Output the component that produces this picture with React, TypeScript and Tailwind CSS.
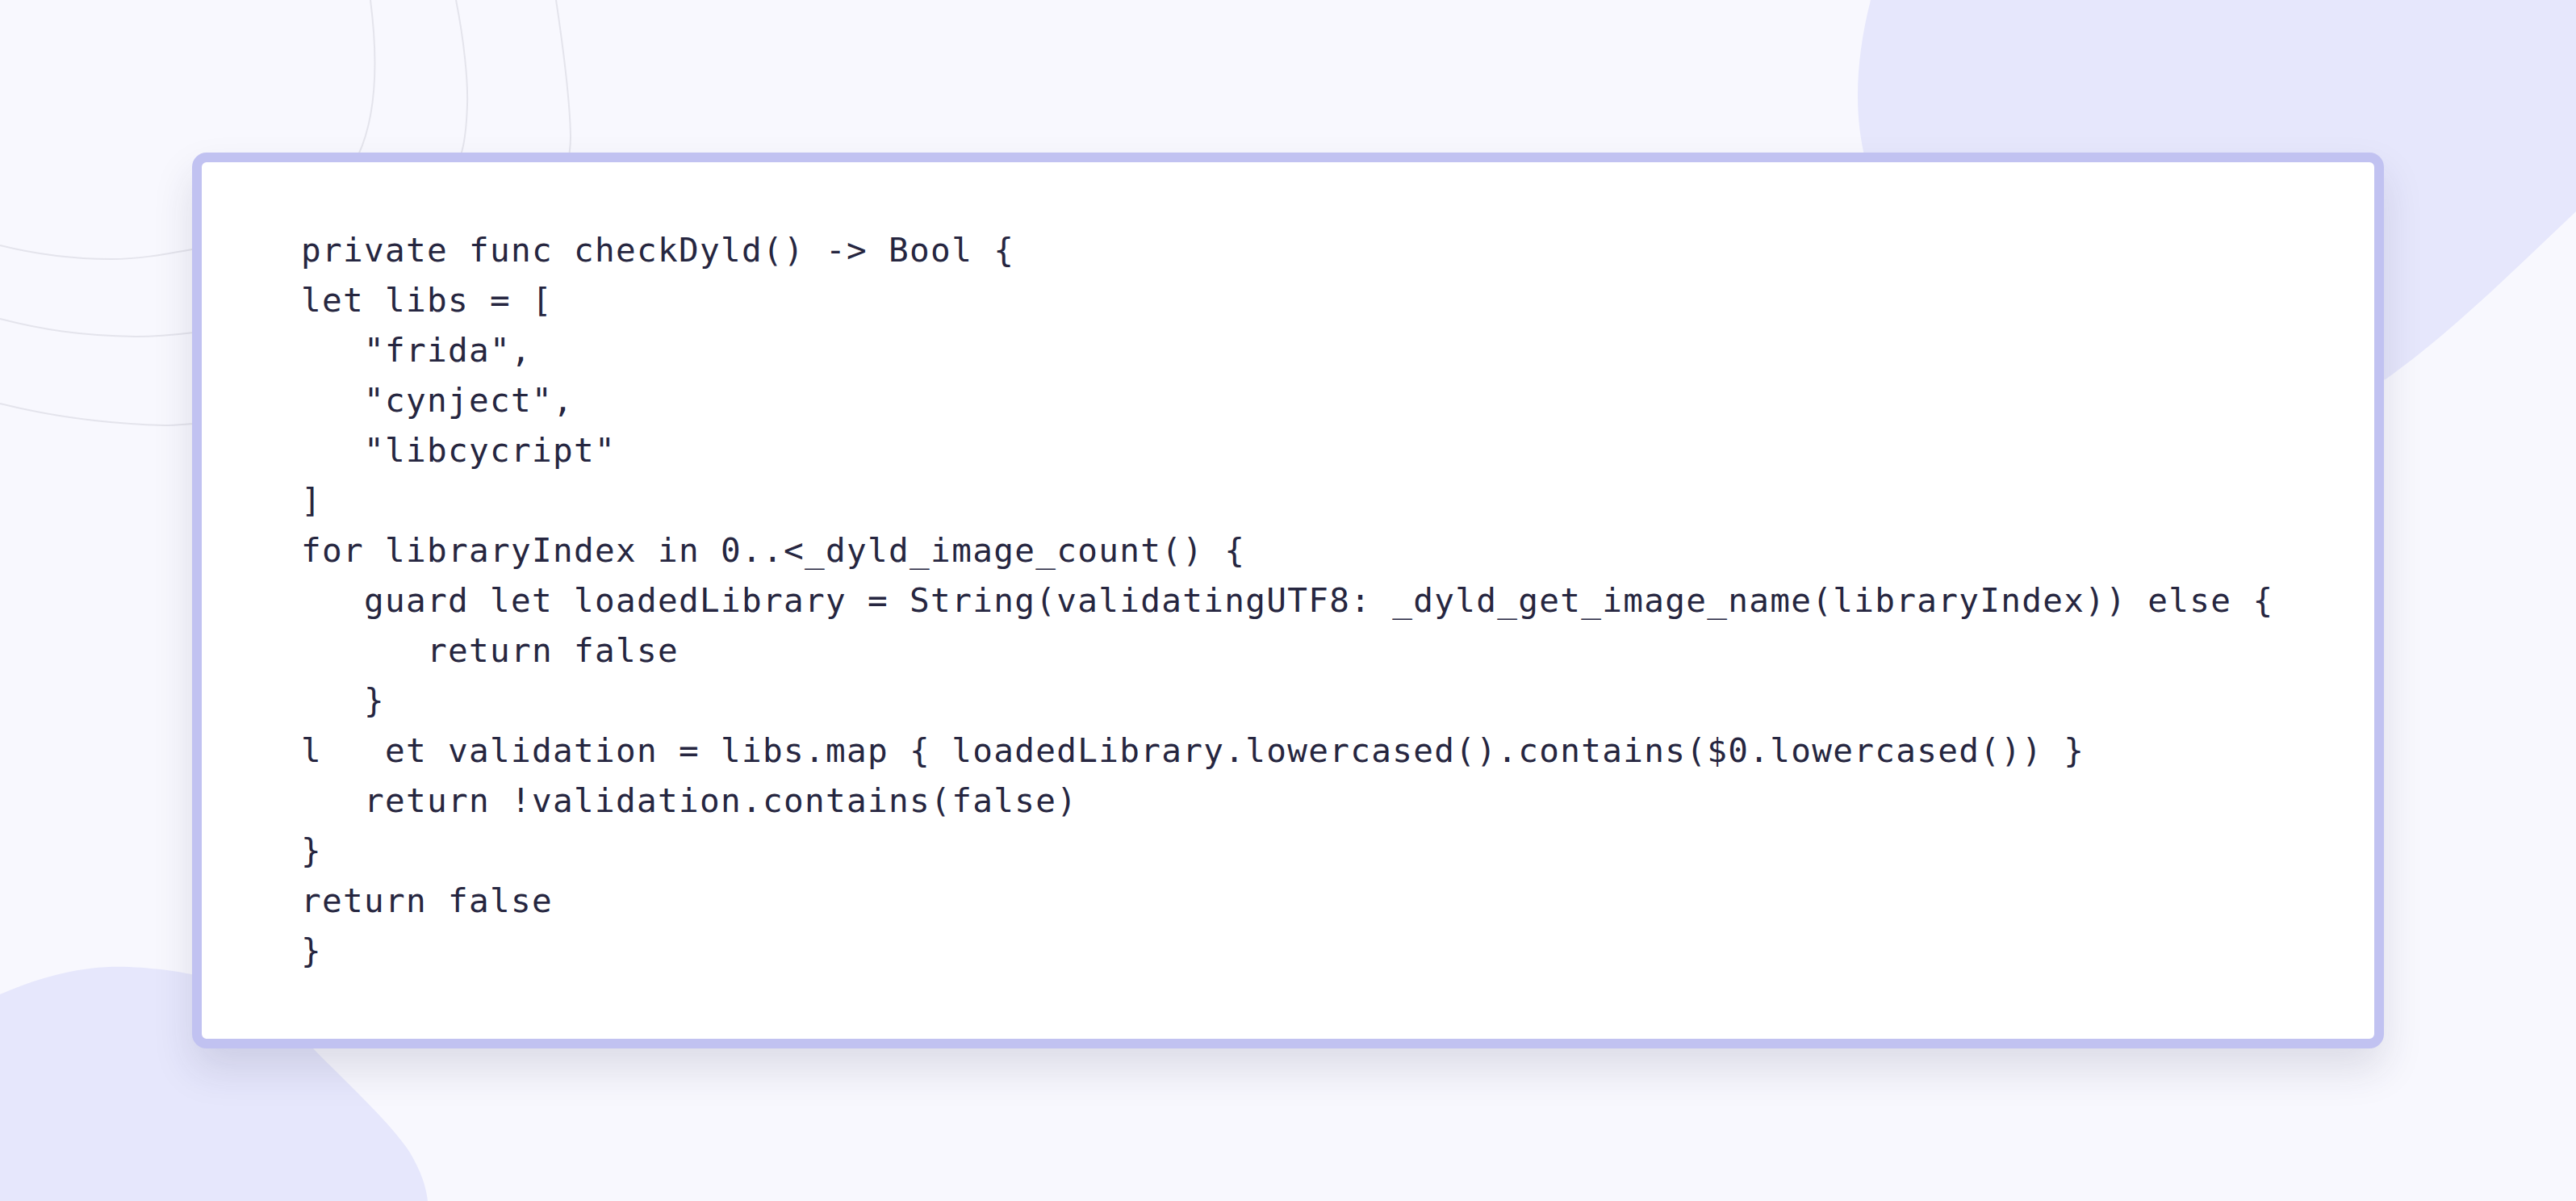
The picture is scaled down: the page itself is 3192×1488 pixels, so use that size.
import React from "react";

const lines: string[] = [
  "private func checkDyld() -> Bool {",
  "let libs = [",
  "   \"frida\",",
  "   \"cynject\",",
  "   \"libcycript\"",
  "]",
  "for libraryIndex in 0..<_dyld_image_count() {",
  "   guard let loadedLibrary = String(validatingUTF8: _dyld_get_image_name(libraryIndex)) else {",
  "      return false",
  "   }",
  "l   et validation = libs.map { loadedLibrary.lowercased().contains($0.lowercased()) }",
  "   return !validation.contains(false)",
  "}",
  "return false",
  "}",
];

function Backdrop() {
  return (
    <svg
      className="absolute inset-0 w-full h-full"
      viewBox="0 0 3192 1488"
      preserveAspectRatio="none"
      aria-hidden="true"
    >
      <path
        d="M2318,0 C2300,70 2296,140 2312,200 C2340,420 2700,560 2956,470 C3040,410 3120,330 3192,262 L3192,0 Z"
        fill="#e6e7fc"
      />
      <path
        d="M0,1232 C60,1206 110,1196 160,1198 C200,1200 225,1204 250,1210 C300,1230 350,1260 388,1299 C430,1342 485,1392 508,1428 C522,1452 528,1470 530,1488 L0,1488 Z"
        fill="#e6e7fc"
      />
      <g fill="none" stroke="#e4e4ec" strokeWidth="2">
        <path d="M459,0 C468,70 468,140 444,192 C400,280 300,305 238,309 C200,316 170,321 138,321 C90,321 40,314 0,304" />
        <path d="M565,0 C575,50 580,100 579,130 C578,160 575,180 571,192 C520,330 380,400 240,412 C215,415 190,417 168,417 C100,416 50,408 0,395" />
        <path d="M689,0 C698,60 706,120 707,168 C708,260 600,480 240,525 C225,526 215,527 204,527 C130,525 60,515 0,500" />
      </g>
    </svg>
  );
}

export default function App() {
  return (
    <div className="relative w-full h-[1488px] overflow-hidden bg-[#f8f8fe] flex items-center justify-center">
      <Backdrop />
      <div className="relative w-[2716px] rounded-[18px] border-[12px] border-[#c1c2f1] bg-white shadow-[0_26px_50px_rgba(40,40,80,0.13)] pl-[123px] pr-[40px] pt-[78px] pb-[78px]">
        <pre className="m-0 font-['DejaVu_Sans_Mono',monospace] text-[41px] leading-[62px] tracking-[1.32px] text-[#262640] whitespace-pre">
          {lines.map((l, i) => (
            <div key={i}>{l === "" ? "\u00a0" : l}</div>
          ))}
        </pre>
      </div>
    </div>
  );
}
